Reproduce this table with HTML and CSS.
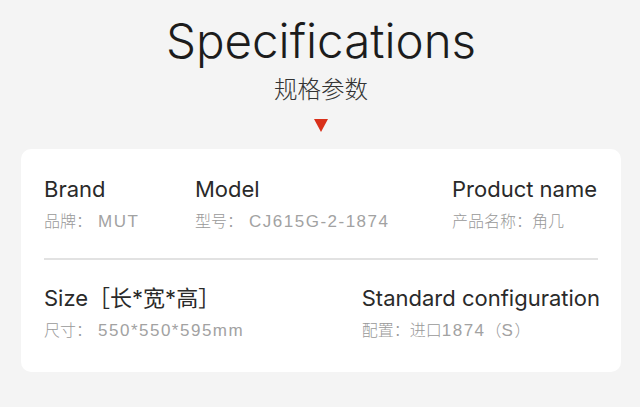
FILE: index.html
```html
<!DOCTYPE html>
<html lang="zh">
<head>
<meta charset="utf-8">
<link rel="stylesheet" href="styles.css">
</head>
<body>
<div class="page">
  <header class="head">
    <h1 class="title">Specifications</h1>
    <div class="subtitle">规格参数</div>
    <div class="arrow"></div>
  </header>
  <section class="card">
    <div class="row row-top">
      <div class="item w-brand">
        <div class="label">Brand</div>
        <div class="value">品牌：<span class="num gap">MUT</span></div>
      </div>
      <div class="item w-model">
        <div class="label">Model</div>
        <div class="value">型号：<span class="num gap">CJ615G-2-1874</span></div>
      </div>
      <div class="item">
        <div class="label">Product name</div>
        <div class="value">产品名称：角几</div>
      </div>
    </div>
    <div class="divider"></div>
    <div class="row row-bottom">
      <div class="item">
        <div class="label">Size［长*宽*高］</div>
        <div class="value">尺寸：<span class="num gap">550*550*595mm</span></div>
      </div>
      <div class="item">
        <div class="label">Standard configuration</div>
        <div class="value">配置：进口<span class="num">1874</span>（<span class="num">S</span>）</div>
      </div>
    </div>
  </section>
</div>
</body>
</html>
```
FILE: styles.css
```css
html, body {
  margin: 0;
  padding: 0;
  background: #f4f4f4;
}
body {
  font-family: "Inter", "Noto Sans CJK SC", sans-serif;
  color: #333;
}
.page {
  width: 640px;
  height: 407px;
  padding: 13px 19px 0 21px;
  box-sizing: border-box;
}
.head {
  display: flex;
  flex-direction: column;
  align-items: center;
}
.title {
  margin: 0;
  font-family: "Inter", sans-serif;
  font-weight: 300;
  font-size: 47.5px;
  line-height: 56px;
  color: #1c1c1c;
}
.subtitle {
  margin-top: 4px;
  font-family: "Noto Sans CJK SC", sans-serif;
  font-weight: 300;
  font-size: 23.5px;
  line-height: 30px;
  color: #333;
}
.arrow {
  margin-top: 16px;
  width: 0;
  height: 0;
  border-left: 7.5px solid transparent;
  border-right: 7.5px solid transparent;
  border-top: 13px solid #d9301a;
}
.card {
  margin-top: 17px;
  background: #fff;
  border-radius: 10px;
  height: 223px;
  padding: 27px 23px 0 23px;
  box-sizing: border-box;
}
.row {
  display: flex;
}
.row-bottom {
  justify-content: space-between;
  margin-right: -2px;
}
.w-brand { width: 151px; }
.w-model { width: 257px; }
.label {
  font-family: "Inter", "Noto Sans CJK SC", sans-serif;
  font-size: 22px;
  line-height: 26px;
  color: #2a2a2a;
}
.value {
  margin-top: 7px;
  font-family: "Noto Sans CJK SC", sans-serif;
  font-weight: 300;
  font-size: 16px;
  line-height: 22px;
  color: #999;
}
.num {
  font-family: "Liberation Sans", sans-serif;
  font-weight: 400;
  font-size: 17px;
  letter-spacing: 1.5px;
  color: #a2a2a2;
}
.gap {
  margin-left: 6px;
}
.divider {
  height: 2px;
  background: #e2e2e2;
  margin: 25px 0 25px;
}
```
